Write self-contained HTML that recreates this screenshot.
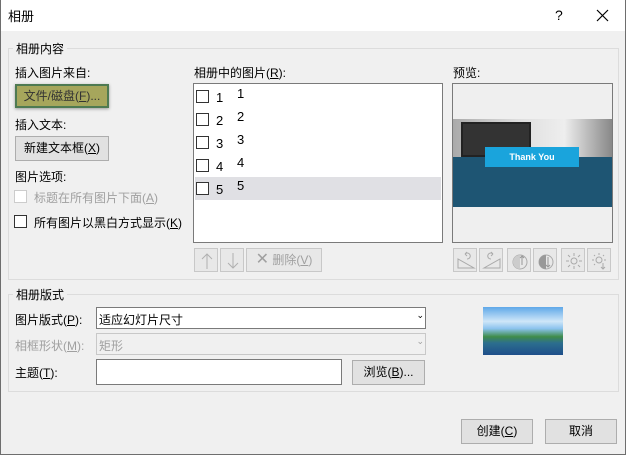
<!DOCTYPE html><html><head><meta charset="utf-8"><style>
*{box-sizing:border-box;margin:0;padding:0}
body{width:626px;height:455px;overflow:hidden;background:#f0f0f0;font-family:"Liberation Sans","Noto Sans CJK SC",sans-serif;font-size:12px;color:#000;position:relative}
.a{position:absolute;white-space:nowrap}
.tb{left:0;top:0;width:626px;height:31px;background:#fff}
.frame{position:absolute;border:1px solid #dcdcdc}
.leg{position:absolute;background:#f0f0f0;padding:0 3px}
.btn{position:absolute;background:#e1e1e1;border:1px solid #adadad;text-align:center;line-height:22px}
.dis{color:#a0a0a0}
.cb{position:absolute;width:13px;height:13px;border:1px solid #333;background:#fff}
.sel{position:absolute;background:#fff;border:1px solid #7a7a7a}
.ib{position:absolute;width:24px;height:24px;border:1px solid #c8c8c8;background:#e8e8e8;top:248px}
.ib svg{position:absolute;left:1px;top:1px}
</style></head><body>
<div class="a tb"></div>
<div class="a" style="left:8px;top:6px;font-size:13px">相册</div>
<div class="a" style="left:555px;top:7px;font-size:14px">?</div>
<svg class="a" style="left:596px;top:9px" width="13" height="13"><path d="M1 1L12 12M12 1L1 12" stroke="#000" stroke-width="1.2"/></svg>
<div style="position:absolute;left:0;top:0;width:626px;height:455px;border:1px solid #6e6e6e;border-top:none"></div>

<div class="frame" style="left:8px;top:48px;width:611px;height:232px"></div>
<div class="leg" style="left:13px;top:40px">相册内容</div>
<div class="a" style="left:15px;top:64px">插入图片来自:</div>
<div class="btn" style="left:15px;top:84px;width:94px;height:24px;background:#a6a65c;border:2px solid #4e7a52;line-height:20px;color:#333;box-shadow:0 1px 3px #999">文件/磁盘(<u>F</u>)...</div>
<div class="a" style="left:15px;top:116px">插入文本:</div>
<div class="btn" style="left:15px;top:136px;width:94px;height:25px">新建文本框(<u>X</u>)</div>
<div class="a" style="left:15px;top:168px">图片选项:</div>
<div class="cb" style="left:14px;top:190px;border-color:#ccc"></div>
<div class="a dis" style="left:34px;top:189px">标题在所有图片下面(<u>A</u>)</div>
<div class="cb" style="left:14px;top:215px"></div>
<div class="a" style="left:34px;top:214px">所有图片以黑白方式显示(<u>K</u>)</div>

<div class="a" style="left:194px;top:64px">相册中的图片(<u>R</u>):</div>
<div class="a" style="left:193px;top:83px;width:250px;height:160px;background:#fff;border:1px solid #7a7a7a"></div>
<div class="a" style="left:195px;top:177px;width:246px;height:23px;background:#e0e0e4"></div>
<div class="cb" style="left:196px;top:90px"></div><div class="a" style="left:216px;top:90px;font-size:13px">1</div><div class="a" style="left:237px;top:86px;font-size:13px">1</div>
<div class="cb" style="left:196px;top:113px"></div><div class="a" style="left:216px;top:113px;font-size:13px">2</div><div class="a" style="left:237px;top:109px;font-size:13px">2</div>
<div class="cb" style="left:196px;top:136px"></div><div class="a" style="left:216px;top:136px;font-size:13px">3</div><div class="a" style="left:237px;top:132px;font-size:13px">3</div>
<div class="cb" style="left:196px;top:159px"></div><div class="a" style="left:216px;top:159px;font-size:13px">4</div><div class="a" style="left:237px;top:155px;font-size:13px">4</div>
<div class="cb" style="left:196px;top:182px"></div><div class="a" style="left:216px;top:182px;font-size:13px">5</div><div class="a" style="left:237px;top:178px;font-size:13px">5</div>
<div class="ib" style="left:194px"><svg width="22" height="22"><path d="M11 4V19M6 9L11 4L16 9" stroke="#b0b0b0" fill="none"/></svg></div>
<div class="ib" style="left:220px"><svg width="22" height="22"><path d="M11 3V18M6 13L11 18L16 13" stroke="#b0b0b0" fill="none"/></svg></div>
<div class="btn dis" style="left:246px;top:248px;width:76px;height:24px;background:#e8e8e8;border-color:#c8c8c8"><span style="font-size:16px">✕</span> 删除(<u>V</u>)</div>

<div class="a" style="left:453px;top:64px">预览:</div>
<div class="a" style="left:452px;top:83px;width:161px;height:160px;border:1px solid #7a7a7a;background:#efefef;overflow:hidden">
<div class="a" style="left:0;top:35px;width:159px;height:38px;background:linear-gradient(90deg,#aaa,#ddd 40%,#eee 70%,#888)"></div>
<div class="a" style="left:8px;top:38px;width:70px;height:35px;background:#333;border:2px solid #222"></div>
<div class="a" style="left:0;top:73px;width:159px;height:50px;background:#1e5573"></div>
<div class="a" style="left:32px;top:63px;width:94px;height:20px;background:#1aa4dc;color:#fff;font-size:9px;font-weight:bold;text-align:center;line-height:20px">Thank You</div>
</div>
<div class="ib" style="left:453px"><svg width="22" height="22"><path d="M3 18H19L3 9Z" stroke="#aaa" fill="none"/><path d="M12 9A3 3 0 1 0 10 4M10 4L12 2M10 4L12 6" stroke="#aaa" fill="none"/></svg></div>
<div class="ib" style="left:479px"><svg width="22" height="22"><path d="M3 18H19V9Z" stroke="#aaa" fill="none"/><path d="M10 9A3 3 0 1 1 12 4M12 4L10 2M12 4L10 6" stroke="#aaa" fill="none"/></svg></div>
<div class="ib" style="left:507px"><svg width="22" height="22"><circle cx="11" cy="12" r="7" stroke="#aaa" fill="none"/><path d="M11 5A7 7 0 0 0 11 19Z" fill="#ccc"/><path d="M13 15V6M11 8L13 6L15 8" stroke="#999" fill="none"/></svg></div>
<div class="ib" style="left:533px"><svg width="22" height="22"><circle cx="11" cy="12" r="7" stroke="#aaa" fill="none"/><path d="M11 5A7 7 0 0 0 11 19Z" fill="#999"/><path d="M13 7V17M11 15L13 17L15 15" stroke="#999" fill="none"/></svg></div>
<div class="ib" style="left:561px"><svg width="22" height="22"><circle cx="11" cy="11" r="3" stroke="#aaa" fill="none"/><path d="M11 3V6M11 16V19M3 11H6M16 11H19M5 5L7 7M15 15L17 17M17 5L15 7M5 17L7 15" stroke="#aaa"/></svg></div>
<div class="ib" style="left:587px"><svg width="22" height="22"><circle cx="10" cy="10" r="3" stroke="#aaa" fill="none"/><path d="M10 3V5M3 10H5M15 10H17M5 5L6 6M14 6L15 5M5 15L6 14M14 13V19M12 17L14 19L16 17" stroke="#aaa" fill="none"/></svg></div>

<div class="frame" style="left:8px;top:294px;width:611px;height:98px"></div>
<div class="leg" style="left:13px;top:286px">相册版式</div>
<div class="a" style="left:15px;top:311px">图片版式(<u>P</u>):</div>
<div class="sel" style="left:96px;top:307px;width:330px;height:22px"><span class="a" style="left:2px;top:3px">适应幻灯片尺寸</span><span class="a" style="right:1px;top:2px;font-size:9px">⌄</span></div>
<div class="a dis" style="left:15px;top:337px">相框形状(<u>M</u>):</div>
<div class="sel dis" style="left:96px;top:333px;width:330px;height:22px;background:#f0f0f0;border-color:#c8c8c8"><span class="a" style="left:2px;top:3px">矩形</span><span class="a" style="right:1px;top:2px;font-size:9px">⌄</span></div>
<div class="a" style="left:15px;top:364px">主题(<u>T</u>):</div>
<div class="sel" style="left:96px;top:359px;width:246px;height:26px"></div>
<div class="btn" style="left:352px;top:360px;width:73px;height:25px">浏览(<u>B</u>)...</div>
<div class="a" style="left:483px;top:307px;width:80px;height:48px;background:linear-gradient(180deg,#5fa8e8 0%,#cfe6f8 30%,#8cc3ee 45%,#3f8c4a 62%,#2c6e8e 75%,#1e4e8a 100%)"></div>

<div class="btn" style="left:461px;top:419px;width:72px;height:25px">创建(<u>C</u>)</div>
<div class="btn" style="left:545px;top:419px;width:72px;height:25px">取消</div>
</body></html>
